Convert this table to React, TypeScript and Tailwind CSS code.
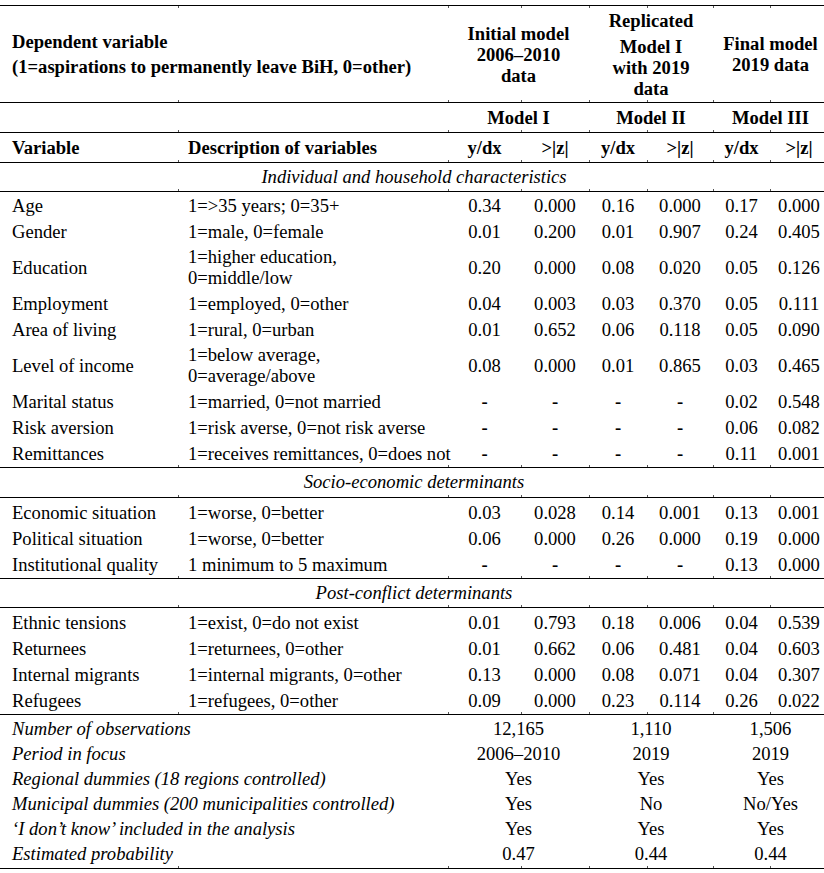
import type { ReactNode } from "react";

// Regression results table (Times-like serif, rules only, no vertical borders).
const COLS = "grid grid-cols-[178px_270px_73px_68px_58px_66px_57px_58px]";
const TICKS = [178, 448, 521, 589, 647, 713, 770];

type Row = { v: string; d: ReactNode; vals: string[]; tall?: boolean };

const individual: Row[] = [
  { v: "Age", d: "1=>35 years; 0=35+", vals: ["0.34", "0.000", "0.16", "0.000", "0.17", "0.000"] },
  { v: "Gender", d: "1=male, 0=female", vals: ["0.01", "0.200", "0.01", "0.907", "0.24", "0.405"] },
  {
    v: "Education",
    d: (
      <>
        1=higher education,
        <br />
        0=middle/low
      </>
    ),
    vals: ["0.20", "0.000", "0.08", "0.020", "0.05", "0.126"],
    tall: true,
  },
  { v: "Employment", d: "1=employed, 0=other", vals: ["0.04", "0.003", "0.03", "0.370", "0.05", "0.111"] },
  { v: "Area of living", d: "1=rural, 0=urban", vals: ["0.01", "0.652", "0.06", "0.118", "0.05", "0.090"] },
  {
    v: "Level of income",
    d: (
      <>
        1=below average,
        <br />
        0=average/above
      </>
    ),
    vals: ["0.08", "0.000", "0.01", "0.865", "0.03", "0.465"],
    tall: true,
  },
  { v: "Marital status", d: "1=married, 0=not married", vals: ["-", "-", "-", "-", "0.02", "0.548"] },
  { v: "Risk aversion", d: "1=risk averse, 0=not risk averse", vals: ["-", "-", "-", "-", "0.06", "0.082"] },
  { v: "Remittances", d: "1=receives remittances, 0=does not", vals: ["-", "-", "-", "-", "0.11", "0.001"] },
];

const socio: Row[] = [
  { v: "Economic situation", d: "1=worse, 0=better", vals: ["0.03", "0.028", "0.14", "0.001", "0.13", "0.001"] },
  { v: "Political situation", d: "1=worse, 0=better", vals: ["0.06", "0.000", "0.26", "0.000", "0.19", "0.000"] },
  { v: "Institutional quality", d: "1 minimum to 5 maximum", vals: ["-", "-", "-", "-", "0.13", "0.000"] },
];

const postConflict: Row[] = [
  { v: "Ethnic tensions", d: "1=exist, 0=do not exist", vals: ["0.01", "0.793", "0.18", "0.006", "0.04", "0.539"] },
  { v: "Returnees", d: "1=returnees, 0=other", vals: ["0.01", "0.662", "0.06", "0.481", "0.04", "0.603"] },
  { v: "Internal migrants", d: "1=internal migrants, 0=other", vals: ["0.13", "0.000", "0.08", "0.071", "0.04", "0.307"] },
  { v: "Refugees", d: "1=refugees, 0=other", vals: ["0.09", "0.000", "0.23", "0.114", "0.26", "0.022"] },
];

const footer: [string, string, string, string][] = [
  ["Number of observations", "12,165", "1,110", "1,506"],
  ["Period in focus", "2006–2010", "2019", "2019"],
  ["Regional dummies (18 regions controlled)", "Yes", "Yes", "Yes"],
  ["Municipal dummies (200 municipalities controlled)", "Yes", "No", "No/Yes"],
  ["\u2018I don\u2019t know\u2019 included in the analysis", "Yes", "Yes", "Yes"],
  ["Estimated probability", "0.47", "0.44", "0.44"],
];

// horizontal rule with the little cell-edge ticks Word leaves behind
function Rule({ below }: { below?: boolean }) {
  return (
    <div className="relative h-px bg-black">
      {TICKS.map((x) => (
        <span
          key={x}
          className={`absolute h-[2px] w-px bg-[#555] ${below ? "top-full" : "bottom-full"}`}
          style={{ left: x }}
        />
      ))}
    </div>
  );
}

function DataRow({ row }: { row: Row }) {
  return (
    <div className={`${COLS} ${row.tall ? "h-[46px]" : "h-[26px]"} items-center`}>
      <div className="pl-3 whitespace-nowrap">{row.v}</div>
      <div className="pl-[10px] leading-[21px] whitespace-nowrap">{row.d}</div>
      {row.vals.map((x, i) => (
        <div key={i} className={`text-center ${x === "-" ? "font-bold" : ""}`}>
          {x}
        </div>
      ))}
    </div>
  );
}

function Section({ title, h }: { title: string; h: string }) {
  return <div className={`flex items-center justify-center pb-[2px] italic ${h}`}>{title}</div>;
}

export default function App() {
  return (
    <div className="w-[824px] overflow-hidden bg-white pt-[5px] font-['Liberation_Serif',serif] text-[18.6px] leading-[21px] text-black">
      <div className="w-[828px]">
        <Rule below />
        {/* header */}
        <div className={`${COLS} h-[96px] items-center font-bold`}>
          <div className="col-span-2 pl-3 leading-[25px]">
            Dependent variable
            <br />
            (1=aspirations to permanently leave BiH, 0=other)
          </div>
          <div className="col-span-2 text-center">
            Initial model
            <br />
            2006–2010
            <br />
            data
          </div>
          <div className="col-span-2 text-center">
            <div className="mb-[5px]">Replicated</div>
            Model I
            <br />
            with 2019
            <br />
            data
          </div>
          <div className="col-span-2 text-center">
            Final model
            <br />
            2019 data
          </div>
        </div>
        <Rule />

        <div className={`${COLS} h-[29px] items-center font-bold`}>
          <div className="col-span-2" />
          <div className="col-span-2 text-center">Model I</div>
          <div className="col-span-2 text-center">Model II</div>
          <div className="col-span-2 text-center">Model III</div>
        </div>
        <Rule />

        <div className={`${COLS} h-[29px] items-center font-bold`}>
          <div className="pl-3">Variable</div>
          <div className="pl-[10px]">Description of variables</div>
          <div className="text-center">y/dx</div>
          <div className="text-center">&gt;|z|</div>
          <div className="text-center">y/dx</div>
          <div className="text-center">&gt;|z|</div>
          <div className="text-center">y/dx</div>
          <div className="text-center">&gt;|z|</div>
        </div>
        <Rule />

        <Section title="Individual and household characteristics" h="h-[28px]" />
        <Rule />
        <div className="pb-px">
          {individual.map((r) => (
            <DataRow key={r.v} row={r} />
          ))}
        </div>
        <Rule />

        <Section title="Socio-economic determinants" h="h-[29px]" />
        <Rule />
        <div className="py-px">
          {socio.map((r) => (
            <DataRow key={r.v} row={r} />
          ))}
        </div>
        <Rule />

        <Section title="Post-conflict determinants" h="h-[28px]" />
        <Rule />
        <div className="py-px">
          {postConflict.map((r) => (
            <DataRow key={r.v} row={r} />
          ))}
        </div>
        <Rule />

        <div className="pt-px pb-[2px]">
          {footer.map(([label, a, b, c]) => (
            <div key={label} className={`${COLS} h-[25px] items-center`}>
              <div className="col-span-2 pl-3 italic whitespace-nowrap">{label}</div>
              <div className="col-span-2 text-center">{a}</div>
              <div className="col-span-2 text-center">{b}</div>
              <div className="col-span-2 text-center">{c}</div>
            </div>
          ))}
        </div>
        <Rule />
      </div>
    </div>
  );
}
